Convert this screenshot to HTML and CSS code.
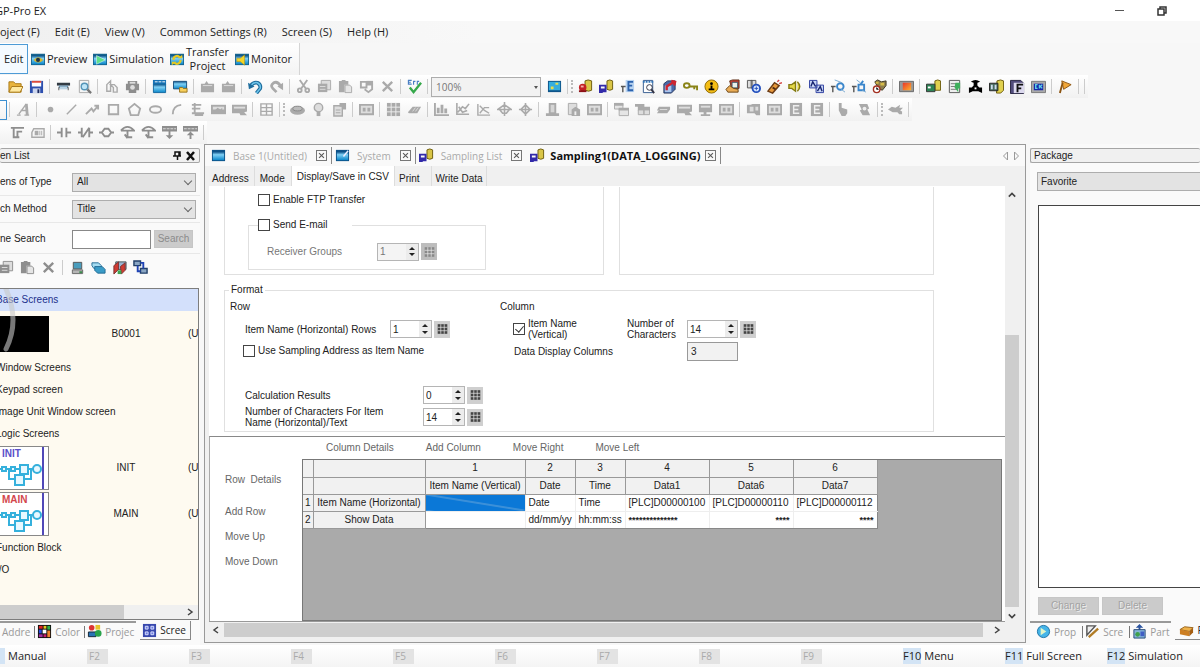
FILE: index.html
```html
<!DOCTYPE html>
<html lang="en">
<head>
  <meta charset="UTF-8">
  <meta name="viewport" content="width=device-width, initial-scale=1.0">
  <title>GP-Pro EX</title>
  <link rel="stylesheet" href="styles.css">
</head>
<body>
  <!-- icon set -->
  <svg class="defs" aria-hidden="true">
    <defs>
      <linearGradient id="blue" x1="0" y1="0" x2="0" y2="1"><stop offset="0" stop-color="#0b4f86"/><stop offset=".35" stop-color="#7fd0f5"/><stop offset="1" stop-color="#0a86c9"/></linearGradient>
      <linearGradient id="sunset" x1="0" y1="0" x2="1" y2="1"><stop offset="0" stop-color="#e8352a"/><stop offset="1" stop-color="#ffb32e"/></linearGradient>
      <symbol id="screen" viewBox="0 0 16 16"><path fill="#0d5288" d="M1 2h14v12H1z"/><path fill="url(#blue)" d="M2 4h12v9H2z"/></symbol>
      <symbol id="system" viewBox="0 0 16 16"><path fill="#0d5288" d="M1 2h14v12H1z"/><path fill="url(#blue)" d="M2 4h12v9H2z"/><path stroke="#eef" stroke-width="1.500" d="M9 9l5-6"/></symbol>
      <symbol id="preview" viewBox="0 0 16 16"><path fill="#17648f" d="M0 2h16v13H0z"/><path fill="url(#blue)" d="M1 4h14v10H1z"/><path fill="#d5b72c" d="M3 9q5-6 11 0-6 6-11 0"/><circle cx="8" cy="9" r="2.300" fill="#234"/></symbol>
      <symbol id="simulate" viewBox="0 0 16 16"><path fill="#17648f" d="M0 2h16v13H0z"/><path fill="url(#blue)" d="M1 4h14v10H1z"/><path fill="#5fe08a" stroke="#fff" stroke-width=".5" d="M4 4l10 5-10 5z"/></symbol>
      <symbol id="transfer" viewBox="0 0 16 16"><path fill="#17648f" d="M0 2h16v13H0z"/><path fill="url(#blue)" d="M1 4h14v10H1z"/><path fill="none" stroke="#e4c822" stroke-width="2.500" d="M4 9a4 4 0 0 1 7-3M12 9a4 4 0 0 1-7 3"/><path fill="#e4c822" d="M9 7h5V3zM7 11H2v4z"/></symbol>
      <symbol id="monitor" viewBox="0 0 16 16"><path fill="#17648f" d="M0 2h16v13H0z"/><path fill="url(#blue)" d="M1 4h14v10H1z"/><path fill="#f4d526" stroke="#977a10" stroke-width=".5" d="M2 7h4l5-4v12l-5-4H2z"/></symbol>
      <symbol id="open" viewBox="0 0 16 16"><path fill="#e9b43c" stroke="#a87818" d="M1 3h5l2 2h6v9H1z"/><path fill="#ffe9a0" stroke="#a87818" d="M4 8h12l-3 6H1z"/></symbol>
      <symbol id="save" viewBox="0 0 16 16"><path fill="#2d4fae" d="M1 2h14v13H1z"/><path fill="#fff" d="M3 2h10v6H3z"/><path fill="#dd4b3c" d="M3 2h10v2H3z"/><path fill="#cdd6ee" d="M4 10h8v5H4z"/><path fill="#1b2a60" d="M9 11h2v4H9z"/></symbol>
      <symbol id="print" viewBox="0 0 16 16"><path fill="#333c44" d="M1 4h14v3H1z"/><path fill="#5c8daf" d="M3 7h10v3H3z"/><path fill="none" stroke="#555" d="M3 12V9h10v3"/><path fill="#b9d3e4" d="M4 8h8v3H4z"/></symbol>
      <symbol id="find" viewBox="0 0 16 16"><path fill="#f5f5f5" stroke="#a7a7a7" d="M2.500 1.500h10v13h-10z"/><circle cx="8" cy="8" r="3.500" fill="#bfe5f7" stroke="#5595b8" stroke-width="1.500"/><path stroke="#777" stroke-width="2.500" d="M11 11l4 4"/></symbol>
      <symbol id="binocs" viewBox="0 0 16 16"><path fill="none" stroke="currentColor" stroke-width="1.500" d="M3 6l4-4v11H3zM7 6h4l3 3v5h-4V9z"/></symbol>
      <symbol id="device" viewBox="0 0 16 16"><path fill="currentColor" d="M3 2h10v3h2v7h-3v3H4v-3H1V5h2z"/><path fill="#ddd" d="M5 3h6v2H5z"/><circle cx="8" cy="9" r="2.500" fill="#ddd"/></symbol>
      <symbol id="newscreen" viewBox="0 0 16 16"><path fill="#1672b5" d="M1 1h14v5H1z"/><path stroke="#fff" stroke-dasharray="3 1" d="M3 3h11"/><path fill="url(#blue)" stroke="#12679f" d="M1.500 5.500h13v9h-13z"/></symbol>
      <symbol id="openscreen" viewBox="0 0 16 16"><path fill="url(#blue)" stroke="#174f7d" d="M.5 2.500h14v8H.5z"/><path fill="#f7d05d" stroke="#98721b" d="M7 9h3l1 1h4v4H7z"/></symbol>
      <symbol id="case" viewBox="0 0 16 16"><path fill="currentColor" d="M1 5h4l2-3 2 3h6v9H1z"/><path stroke="#ddd" d="M3 7h10"/></symbol>
      <symbol id="undo" viewBox="0 0 16 16"><path fill="none" stroke="#1f6e9e" stroke-width="4" d="M3 7q3-4 7-3 4 2 3 6l-4 5"/><path fill="none" stroke="#6ec6ec" stroke-width="1.500" d="M3 7q3-4 7-3 4 2 3 6l-4 5"/><path fill="#1f6e9e" d="M0 4l1 7 6-3z"/></symbol>
      <symbol id="redo" viewBox="0 0 16 16"><path fill="none" stroke="currentColor" stroke-width="3" d="M12 7Q9 2 5 4 1 7 4 10l4 4"/><path fill="currentColor" d="M15 4v8L9 8z"/></symbol>
      <symbol id="cut" viewBox="0 0 16 16"><g fill="none" stroke="currentColor" stroke-width="2"><path d="M4 1l7 10M12 1L5 11"/><circle cx="4" cy="12" r="2"/><circle cx="12" cy="12" r="2"/></g></symbol>
      <symbol id="copy" viewBox="0 0 16 16"><path fill="#ddd" stroke="currentColor" d="M4.500 1.500h10v10h-10z"/><path fill="currentColor" d="M1 5h10v9H1z"/><path stroke="#ddd" d="M3 8h6M3 11h6"/></symbol>
      <symbol id="paste" viewBox="0 0 16 16"><path fill="currentColor" d="M1 2h3V1h4v1h3v4H7v8H1z"/><path fill="#e5e5e5" stroke="currentColor" d="M7.500 6.500h5l2 2v6h-7z"/></symbol>
      <symbol id="multi" viewBox="0 0 16 16"><path fill="none" stroke="currentColor" stroke-width="2" d="M2 3h6v6H2zM7 6h7v5l-4 3-4-3"/><path fill="currentColor" d="M8 2h7v4H8z"/></symbol>
      <symbol id="delete" viewBox="0 0 16 16"><path stroke="currentColor" stroke-width="2.500" d="M3 3l10 10M13 3L3 13"/></symbol>
      <symbol id="check" viewBox="0 0 16 16"><path fill="none" stroke="#4a7fc4" stroke-width="1.200" d="M1.500 1v5M1 1.500h4M1 3.500h3M1 5.500h4M7 6V2.500h2M11 6V2.500h2"/><path fill="none" stroke="#35a84a" stroke-width="2.500" d="M3 9l4 5 8-10"/></symbol>
      <symbol id="fit" viewBox="0 0 16 16"><path fill="#0e5489" d="M1 2h14v12H1z"/><path fill="#35aede" d="M2 3h12v9H2z"/><path fill="#e6dc4d" d="M4 8h3v3H4zM9 4h3v2H9z"/></symbol>
      <symbol id="drum-red" viewBox="0 0 16 16"><path fill="#d9c547" stroke="#6c5b0c" d="M7.500 2q3-2 7 0v10q-3 2-7 0z"/><circle cx="5" cy="9" r="4" fill="#c31f24"/><path fill="#8b1016" d="M1 12h8v2H1z"/><path fill="#f3b0a8" d="M3 7h3v2H3z"/></symbol>
      <symbol id="drum-blue" viewBox="0 0 16 16"><path fill="#d9c547" stroke="#6c5b0c" d="M8.500 2q3-2 6 0v9q-3 2-6 0z"/><path fill="none" stroke="#322aa9" stroke-width="2" d="M1 13V7h6v6H5v-2H3v3H0"/></symbol>
      <symbol id="drum-green" viewBox="0 0 16 16"><path fill="#e0d04e" stroke="#6c5b0c" d="M9.500 2q3-2 6 0v10h-6z"/><path fill="#2d8355" stroke="#333" d="M.5 5.500h9v8h-9z"/><path fill="#fff" d="M2 8h3v2H2z"/></symbol>
      <symbol id="drum-gray" viewBox="0 0 16 16"><path fill="#e0d04e" stroke="#6c5b0c" d="M8.500 2q4-2 7 0v10l-3 3H8z"/><path fill="#47695c" stroke="#222" d="M.5 4.500h9v8h-9z"/><path fill="#cde" d="M2 6h2v5H2zM6 6h2v5H6z"/></symbol>
      <symbol id="te" viewBox="0 0 16 16"><path fill="#b8d3f0" d="M6 1h9v13H6z"/><path fill="none" stroke="#555" stroke-width="1.500" d="M1 8h5M3 8v6"/><path fill="none" stroke="#2b62ad" stroke-width="2" d="M14 3H9v9h5M9 7h4"/></symbol>
      <symbol id="paperlens" viewBox="0 0 16 16"><path fill="#fff" stroke="#31588d" d="M2.500 1.500h10v13h-10z"/><path stroke="#3275b8" stroke-width="2" stroke-dasharray="2 1" d="M2 3h12"/><circle cx="9" cy="9" r="3" fill="none" stroke="#334"/><path stroke="#334" stroke-width="2" d="M11 11l3 4"/></symbol>
      <symbol id="pages" viewBox="0 0 16 16"><path fill="#4a69a9" stroke="#26365c" d="M2 5l4-3h8v9l-4 4H2z"/><path fill="#a9c6ed" d="M3 7h7v7H3z"/><path fill="none" stroke="#cf2530" stroke-width="2.500" d="M5 12V8l8-5M10 2l4 1-1 4"/></symbol>
      <symbol id="key" viewBox="0 0 16 16"><path fill="none" stroke="#8a8418" stroke-width="2" d="M7 8h8v4M12 8v3"/><ellipse cx="4" cy="7" rx="3" ry="2.500" fill="#fff" stroke="#8a8418" stroke-width="2"/></symbol>
      <symbol id="warn" viewBox="0 0 16 16"><circle cx="8" cy="8" r="7" fill="#f4bd16" stroke="#8e6a06"/><circle cx="8" cy="5" r="1.500"/><path d="M7 7h2v3h2v2H5v-2h2z"/></symbol>
      <symbol id="handbox" viewBox="0 0 16 16"><path fill="#c43e31" stroke="#603018" d="M5 2l3-1h7v9H7z"/><path fill="#e8f0ea" stroke="#356" d="M7.500 3.500h6v6h-6z"/><path fill="#e9ac56" stroke="#6b4617" d="M1 11l4-4 4 3 5 1v3H3z"/></symbol>
      <symbol id="docs" viewBox="0 0 16 16"><path fill="#ddd" stroke="#555" d="M1.500 1.500h5v8h-5zM5.500 1.500h5v8h-5z"/><circle cx="11" cy="10" r="4" fill="#dae9ff" stroke="#2450bd" stroke-width="2"/><path stroke="#2450bd" d="M9 10h4M11 8v4"/></symbol>
      <symbol id="remote" viewBox="0 0 16 16"><path fill="#e7983b" stroke="#6c3b14" stroke-width="1.500" d="M1 13L8 4l5 3-7 8z"/><path stroke="#512a11" stroke-width="2" d="M6 9l3 2"/><path stroke="#d54545" stroke-width="1.500" d="M11 3l2-2M13 5l3-1"/></symbol>
      <symbol id="sound" viewBox="0 0 16 16"><path fill="#e5d947" stroke="#847b12" stroke-width="1.500" d="M1 6h3l4-3v10l-4-3H1zM10 3q5 5 0 10"/></symbol>
      <symbol id="aa" viewBox="0 0 16 16"><path fill="#c8d5f5" stroke="#2c3d9f" d="M.5 1.500h8v8h-8zM7.500 6.500h8v8h-8z"/><path fill="none" stroke="#17236f" stroke-width="1.500" d="M2 8l2-5 3 5M9 13l3-5 2 5"/></symbol>
      <symbol id="tq" viewBox="0 0 16 16"><path fill="none" stroke="#555" stroke-width="1.500" d="M1 8h5M3 8v6"/><circle cx="11" cy="8" r="3.500" fill="none" stroke="#3a86cc" stroke-width="2"/><path stroke="#77a7cf" d="M5 1l8 3M12 11l4 3"/></symbol>
      <symbol id="tb" viewBox="0 0 16 16"><path fill="none" stroke="#555" stroke-width="1.500" d="M1 8h5M3 8v6"/><path fill="none" stroke="#3a86cc" stroke-width="2" d="M8 6h6v6H8zM10 6L13 2"/><path stroke="#77a7cf" d="M6 1l4 3M12 12l4 2"/></symbol>
      <symbol id="clockgear" viewBox="0 0 16 16"><path fill="#8d7e4c" stroke="#3b3420" d="M3 3l3-2 4 2 5-1v5l-4 5-4-2z"/><path fill="#d6bb48" d="M4 3h3v2H4zM9 4h4v3H9z"/><circle cx="5" cy="11" r="3.500" fill="#fff" stroke="#a33021" stroke-width="1.500"/><path stroke="#222" d="M5 9v2h2"/></symbol>
      <symbol id="pic" viewBox="0 0 16 16"><path fill="#999" stroke="#666" d="M.5 2.500h15v11H.5z"/><path fill="url(#sunset)" d="M4 4h9v8H4z"/></symbol>
      <symbol id="note" viewBox="0 0 16 16"><path fill="#eee" stroke="#555" d="M2.500 1.500h11v13h-11z"/><path stroke="#777" d="M4 5h7M4 8h7M4 11h7"/><path fill="#3faf5c" d="M9 4h5v6h-2v4L8 9z"/></symbol>
      <symbol id="valve" viewBox="0 0 16 16"><path d="M3 3q5-4 10 0l-3 1v3l2 2h3v6l-4-2H5l-4 2V9h3l2-2V4z"/><path fill="#fff" d="M7 9h2v2H7z"/></symbol>
      <symbol id="fbox" viewBox="0 0 16 16"><path fill="#514c7c" stroke="#25223f" d="M.5 1.500h11l3 3v11h-14z"/><path fill="#dcd9ee" d="M4 4h11v11H4z"/><path fill="none" stroke="#111" stroke-width="2" d="M8 14V6h6M8 10h4"/></symbol>
      <symbol id="ck" viewBox="0 0 16 16"><path fill="#aaa" stroke="#777" d="M.5 2.500h15v12H.5z"/><path fill="#1726a8" d="M3 5h10v7H3z"/><path fill="none" stroke="#5bd0e8" stroke-width="1.500" d="M7 6H5v4h2M9 6v4M12 6l-2 2 2 2"/></symbol>
      <symbol id="flag" viewBox="0 0 16 16"><path fill="#f0a638" stroke="#8c5410" d="M4 2l10 4-8 5z"/><path stroke="#8c5410" stroke-width="2" d="M5 4L2 15"/></symbol>
      <symbol id="letter" viewBox="0 0 16 16"><path fill="none" stroke="currentColor" stroke-width="1.500" d="M1 14h4M9 14h5M3 13L11 2M5 9h6"/><path stroke="currentColor" stroke-width="3" d="M11 2l1 12"/></symbol>
      <symbol id="dot" viewBox="0 0 16 16"><circle cx="8" cy="8" r="3" fill="currentColor"/></symbol>
      <symbol id="line" viewBox="0 0 16 16"><path stroke="currentColor" stroke-width="1.500" d="M3 13L13 3"/></symbol>
      <symbol id="poly" viewBox="0 0 16 16"><path fill="none" stroke="currentColor" stroke-width="2" d="M1 13l6-6 2 3 5-6M10 4h4v4"/></symbol>
      <symbol id="rect" viewBox="0 0 16 16"><path fill="none" stroke="currentColor" stroke-width="2" d="M3 3h10v10H3z"/></symbol>
      <symbol id="penta" viewBox="0 0 16 16"><path fill="none" stroke="currentColor" stroke-width="2" d="M8 2l6 5-2 7H4L2 7z"/></symbol>
      <symbol id="ellipse" viewBox="0 0 16 16"><ellipse cx="8" cy="8" rx="6" ry="3.500" fill="none" stroke="currentColor" stroke-width="2"/></symbol>
      <symbol id="arc" viewBox="0 0 16 16"><path fill="none" stroke="currentColor" stroke-width="2" d="M4 13Q4 4 13 3"/></symbol>
      <symbol id="scale" viewBox="0 0 16 16"><path fill="none" stroke="currentColor" stroke-width="2" d="M5 1v11h10M2 3h10M2 7h9M5 14h9M2 12h3"/></symbol>
      <symbol id="img" viewBox="0 0 16 16"><path fill="currentColor" d="M0 3h16v10H0z"/><path fill="#ddd" d="M2 5h12v3H2z"/><path fill="currentColor" d="M4 9l3-3 3 2 2-2v3z"/></symbol>
      <symbol id="imgcut" viewBox="0 0 16 16"><path fill="currentColor" d="M0 3h16v7l-3 1 3 3H9l-1-2H0z"/><path fill="#ddd" d="M2 5h12v2H2z"/></symbol>
      <symbol id="table" viewBox="0 0 16 16"><path fill="none" stroke="currentColor" stroke-width="1.500" d="M2 2h12v12H2zM8 2v12M2 6h12M2 10h12"/></symbol>
      <symbol id="switch" viewBox="0 0 16 16"><ellipse cx="8" cy="9" rx="8" ry="4.500" fill="currentColor"/><ellipse cx="8" cy="7" rx="5" ry="2.500" fill="#bbb" stroke="#888"/></symbol>
      <symbol id="lamp" viewBox="0 0 16 16"><circle cx="8" cy="6" r="4.500" fill="#ddd" stroke="currentColor" stroke-width="1.500"/><path fill="currentColor" d="M6 10h4v5H6z"/></symbol>
      <symbol id="part" viewBox="0 0 16 16"><path fill="#ddd" stroke="currentColor" stroke-width="1.500" d="M2 4h9v11H2z"/><path fill="currentColor" d="M8 1h7v7h-4V5H8zM4 8h5v1H4zM4 11h5v1H4z"/></symbol>
      <symbol id="panel" viewBox="0 0 16 16"><path fill="#ddd" stroke="currentColor" stroke-width="2" d="M1 3h14v10H1z"/><path fill="currentColor" d="M4 6h3v4H4zM9 6h3v4H9z"/></symbol>
      <symbol id="keypad" viewBox="0 0 16 16"><path fill="currentColor" d="M1 1h14v14H1z"/><path stroke="#eee" d="M1 5.500h14M1 10.500h14M5.500 1v14M10.500 1v14"/></symbol>
      <symbol id="eraser" viewBox="0 0 16 16"><path fill="currentColor" d="M1 11l5-6h9l-4 7H2z"/><path stroke="#ddd" d="M6 10l3-4M9 10l3-4"/></symbol>
      <symbol id="bars" viewBox="0 0 16 16"><path fill="currentColor" d="M0 1h2v12h14v2H0zM3 6h3v6H3zM7 3h3v9H7zM11 7h3v5h-3z"/></symbol>
      <symbol id="trend" viewBox="0 0 16 16"><path fill="none" stroke="currentColor" stroke-width="1.700" d="M2 1v12h13M3 11l5-6 3 2 4-5M4 5l4 6 5-2"/></symbol>
      <symbol id="xy" viewBox="0 0 16 16"><path fill="none" stroke="currentColor" stroke-width="1.500" d="M2 2v12h13M4 4l5 5 5 3M4 12l5-6 5 0"/></symbol>
      <symbol id="radar" viewBox="0 0 16 16"><path fill="none" stroke="currentColor" stroke-width="1.700" d="M8 3l6 4-4 5H6L2 7zM8 0v15M0 8h16"/></symbol>
      <symbol id="diamond" viewBox="0 0 16 16"><path fill="none" stroke="currentColor" stroke-width="1.700" d="M8 3l5 5-5 5-5-5zM8 1v14M1 8h14"/></symbol>
      <symbol id="bell" viewBox="0 0 16 16"><path fill="currentColor" d="M4 1h8v11h3v3H1v-3h3z"/><path fill="#d5d5d5" d="M6 3h4v8H6z"/></symbol>
      <symbol id="sheet" viewBox="0 0 16 16"><path fill="#ddd" stroke="currentColor" d="M2.500 1.500h9v12h-9z"/><path fill="currentColor" d="M6 8l4-3 5 3v7H6z"/><path fill="#eee" d="M9 10h2v4H9z"/></symbol>
      <symbol id="windows" viewBox="0 0 16 16"><path fill="#e5e5e5" stroke="currentColor" d="M.5 1.500h9v6h-9zM5.500 7.500h10v7h-10z"/><path fill="currentColor" d="M0 1h10v3H0zM5 6h11v3H5z"/></symbol>
      <symbol id="windows2" viewBox="0 0 16 16"><path fill="currentColor" d="M0 2h10v3H0zM3 5h13v4H3z"/><path fill="#ddd" stroke="currentColor" d="M3.500 8.500h6v5h-6zM9.500 8.500h6v5h-6z"/></symbol>
      <symbol id="slab" viewBox="0 0 16 16"><path fill="currentColor" d="M3 5h12v3l-3 4H1l2-3H1z"/><path stroke="#ddd" d="M4 8h8"/></symbol>
      <symbol id="pc" viewBox="0 0 16 16"><path fill="currentColor" d="M1 2h14v9H9v2h4v2H3v-2h3v-2H1z"/><path fill="#ddd" d="M3 4h10v2H3z"/></symbol>
      <symbol id="movie" viewBox="0 0 16 16"><path fill="currentColor" d="M1 3h4l2-1h8v12h-4l-2-2H1z"/><path fill="#ddd" d="M4 5h4v5H4zM10 5h3v4h-3z"/></symbol>
      <symbol id="ebox" viewBox="0 0 16 16"><path fill="currentColor" d="M2 1h13v14H2z"/><path fill="none" stroke="#eee" stroke-width="1.500" d="M12 4H6v8h6M6 8h5"/></symbol>
      <symbol id="finger" viewBox="0 0 16 16"><path fill="currentColor" d="M3 1h3v5l6 2v4l-2 3H6L3 9z"/></symbol>
      <symbol id="scroll" viewBox="0 0 16 16"><path fill="currentColor" d="M2 2h9l2 5-2 1 3 6H6l-3-5 2-1z"/><circle cx="8" cy="7" r="2" fill="#eee"/></symbol>
      <symbol id="cloud" viewBox="0 0 16 16"><path fill="currentColor" d="M0 8l4-3 4 1 5-3-1 3h4l-3 3 2 1v3h-3l-2-2H5z"/></symbol>
      <symbol id="tf" viewBox="0 0 16 16"><path fill="none" stroke="currentColor" stroke-width="2" d="M2 3h14M5 3v10h4V7h5M4 13h7"/></symbol>
      <symbol id="tag" viewBox="0 0 16 16"><path fill="none" stroke="currentColor" stroke-width="1.500" d="M4 4h11v9H2V8z"/><path fill="currentColor" d="M5 6h4v5H5zM10 6h1v5h-1zM12 6h1v5h-1z"/></symbol>
      <symbol id="contact" viewBox="0 0 16 16"><path fill="none" stroke="currentColor" stroke-width="2" d="M0 8h5M5 3v10M10 3v10M10 8h5"/></symbol>
      <symbol id="nc" viewBox="0 0 16 16"><path fill="none" stroke="currentColor" stroke-width="2" d="M0 8h4M4 3v10M12 3v10M12 8h4M5 13l7-10"/></symbol>
      <symbol id="coil" viewBox="0 0 16 16"><path fill="none" stroke="currentColor" stroke-width="2" d="M0 8h3l3-4h4l3 4h3M3 8l3 4h4l3-4"/></symbol>
      <symbol id="branch" viewBox="0 0 16 16"><path fill="none" stroke="currentColor" stroke-width="2" d="M1 6q7-8 14 0H1M8 6v7h5M5 10l3 4"/></symbol>
      <symbol id="insert" viewBox="0 0 16 16"><path fill="currentColor" d="M0 1h16v6H0zM7 7h2v4h3l-4 4-4-4h3z"/><path stroke="#ddd" stroke-dasharray="3 1" d="M1 4h14"/></symbol>
      <symbol id="append" viewBox="0 0 16 16"><path fill="currentColor" d="M0 1h16v6H0zM7 15h2v-4h3L8 7l-4 4h3z"/><path stroke="#ddd" stroke-dasharray="3 1" d="M1 4h14"/></symbol>
      <symbol id="laptop" viewBox="0 0 16 16"><path fill="#4a9dbd" stroke="#555" d="M3.500 2.500h9v7h-9z"/><path fill="#b5b5b5" stroke="#666" d="M2.500 10.500h11v4h-11z"/><path stroke="#3c8e4e" stroke-width="2" d="M10 13h3"/></symbol>
      <symbol id="sheets" viewBox="0 0 16 16"><path fill="#a6dcf1" stroke="#246c94" d="M1 3h7l3 3-1 3H3L1 6z"/><path fill="#3a9cc7" stroke="#246c94" d="M4 7h8l3 3v4H7L4 11z"/></symbol>
      <symbol id="redbook" viewBox="0 0 16 16"><path fill="#9bb6d3" stroke="#455" d="M4 2h11v8H4z"/><path fill="#cf3b32" stroke="#733" d="M2 6l5-4v8l-5 5zM9 7l5-4v8l-4 4z"/><path fill="#3fa351" d="M6 11h4v4H6z"/></symbol>
      <symbol id="nodes" viewBox="0 0 16 16"><path fill="#8aa6c4" stroke="#234069" stroke-width="1.500" d="M1 1h7v5H1zM8 9h7v5H8z"/><path fill="none" stroke="#1f43b4" stroke-width="2" d="M5 6v6h3M11 9V3H8"/></symbol>
      <symbol id="palette" viewBox="0 0 16 16"><path fill="#111" d="M1 1h14v14H1z"/><path fill="#d22" d="M2 2h4v3H2z"/><path fill="#e5c91f" d="M7 2h3v3H7z"/><path fill="#2ab04b" d="M11 2h3v4h-3z"/><path fill="#2a4be0" d="M2 6h3v4H2z"/><path fill="#fff" d="M6 6h4v4H6z"/><path fill="#a3309f" d="M2 11h4v3H2z"/><path fill="#f0832a" d="M11 7h3v7h-3z"/><path fill="#c31d6c" d="M7 11h3v3H7z"/></symbol>
      <symbol id="project" viewBox="0 0 16 16"><circle cx="5" cy="4" r="3" fill="#d33"/><path fill="#e7c42b" d="M9 1h5v5H9z"/><path fill="#2873b4" stroke="#123" d="M1.500 8.500h8v5h-8z"/><circle cx="12" cy="10" r="3.500" fill="#28a34a"/></symbol>
      <symbol id="tiles" viewBox="0 0 16 16"><path fill="#3848ad" d="M1 1h14v14H1z"/><path fill="#6d7ce0" stroke="#dce2ff" d="M3.500 3.500h3v3h-3zM9.500 3.500h3v3h-3zM3.500 9.500h3v3h-3zM9.500 9.500h3v3h-3z"/></symbol>
      <symbol id="globe" viewBox="0 0 16 16"><circle cx="8" cy="8" r="6.500" fill="#46b5e8" stroke="#1a71a5"/><path fill="#e2f5c8" d="M5 4l6 4-6 4z"/></symbol>
      <symbol id="ruler" viewBox="0 0 16 16"><path fill="#eee" stroke="#555" stroke-width="1.500" d="M2 2h9L2 12z"/><path stroke="#b17c25" stroke-width="2.500" d="M4 14l10-9"/></symbol>
      <symbol id="parts" viewBox="0 0 16 16"><path fill="#2a53a0" d="M8 0l4 4H9v3H7V4H4z"/><path fill="#85b5d9" stroke="#274a78" d="M2 6h12v9H2z"/><circle cx="6" cy="11" r="2.500" fill="#3fa04d"/><path fill="#405ec4" d="M9 8h4v5H9z"/></symbol>
      <symbol id="box" viewBox="0 0 16 16"><path fill="#efb24a" stroke="#96621a" d="M1 7l5-3 9 1-4 4z"/><path fill="#cd7f22" d="M1 7l10 2v5L1 12z"/><path fill="#a55e12" d="M11 9l4-4v5l-4 4z"/></symbol>
      <symbol id="logic" viewBox="0 0 48 28"><path fill="none" stroke="#35b0dc" stroke-width="2" d="M0 8h20M28 8h6M9 8v10h6M31 8v10h-6"/><g fill="#e8f8ff" stroke="#35b0dc" stroke-width="2"><path d="M2 6h4v4H2zM11 6h4v4h-4zM20 4h8v9h-8zM15 14h9v10h-9z"/><circle cx="37" cy="8" r="4"/></g></symbol>
    </defs>
  </svg>

  <div class="window">
    <header class="titlebar">
      <h1>GP-Pro EX</h1>
      <div class="wincontrols">
        <button aria-label="Minimize"><svg viewBox="0 0 12 12"><path stroke="#555" d="M1 5.500h9"/></svg></button>
        <button aria-label="Restore"><svg viewBox="0 0 12 12"><path fill="none" stroke="#333" stroke-width="1.500" d="M2 4h6v6H2zM4 4V2h6v6H8"/></svg></button>
      </div>
    </header>

    <nav class="menubar">
      <button>oject (F)</button>
      <button>Edit (E)</button>
      <button>View (V)</button>
      <button>Common Settings (R)</button>
      <button>Screen (S)</button>
      <button>Help (H)</button>
    </nav>

    <div class="modebar">
      <button class="mode active">Edit</button>
      <button class="mode"><svg><use href="#preview"/></svg>Preview</button>
      <button class="mode"><svg><use href="#simulate"/></svg>Simulation</button>
      <button class="mode"><svg><use href="#transfer"/></svg><span>Transfer<br>Project</span></button>
      <button class="mode"><svg><use href="#monitor"/></svg>Monitor</button>
    </div>

    <div class="toolbar first">
      <svg class="tool"><use href="#open"/></svg>
      <svg class="tool"><use href="#save"/></svg>
      <i class="sep"></i>
      <svg class="tool"><use href="#print"/></svg>
      <svg class="tool"><use href="#find"/></svg>
      <i class="sep"></i>
      <svg class="tool"><use href="#binocs"/></svg>
      <svg class="tool dark"><use href="#device"/></svg>
      <i class="sep"></i>
      <svg class="tool"><use href="#newscreen"/></svg>
      <svg class="tool"><use href="#openscreen"/></svg>
      <i class="sep"></i>
      <svg class="tool"><use href="#case"/></svg>
      <svg class="tool"><use href="#case"/></svg>
      <i class="sep"></i>
      <svg class="tool"><use href="#undo"/></svg>
      <svg class="tool"><use href="#redo"/></svg>
      <i class="sep"></i>
      <svg class="tool"><use href="#cut"/></svg>
      <svg class="tool"><use href="#copy"/></svg>
      <svg class="tool"><use href="#paste"/></svg>
      <svg class="tool"><use href="#multi"/></svg>
      <svg class="tool"><use href="#delete"/></svg>
      <i class="sep"></i>
      <svg class="tool"><use href="#check"/></svg>
      <i class="sep"></i>
      <span class="dropdown zoom"><select aria-label="Zoom"><option>100%</option></select></span>
      <svg class="tool"><use href="#fit"/></svg>
      <i class="sep"></i><i class="grip"></i>
      <svg class="tool"><use href="#drum-red"/></svg>
      <svg class="tool"><use href="#drum-blue"/></svg>
      <svg class="tool"><use href="#te"/></svg>
      <svg class="tool"><use href="#paperlens"/></svg>
      <svg class="tool"><use href="#pages"/></svg>
      <svg class="tool"><use href="#key"/></svg>
      <svg class="tool"><use href="#warn"/></svg>
      <svg class="tool"><use href="#handbox"/></svg>
      <svg class="tool"><use href="#docs"/></svg>
      <svg class="tool"><use href="#remote"/></svg>
      <svg class="tool"><use href="#sound"/></svg>
      <svg class="tool"><use href="#aa"/></svg>
      <svg class="tool"><use href="#tq"/></svg>
      <svg class="tool"><use href="#tb"/></svg>
      <svg class="tool"><use href="#clockgear"/></svg>
      <i class="sep"></i>
      <svg class="tool"><use href="#pic"/></svg>
      <i class="sep"></i>
      <svg class="tool"><use href="#drum-green"/></svg>
      <svg class="tool"><use href="#note"/></svg>
      <svg class="tool"><use href="#valve"/></svg>
      <svg class="tool"><use href="#drum-gray"/></svg>
      <svg class="tool"><use href="#fbox"/></svg>
      <svg class="tool"><use href="#ck"/></svg>
      <i class="sep"></i>
      <svg class="tool"><use href="#flag"/></svg>
      <i class="sep"></i><i class="sep"></i>
    </div>

    <div class="toolbar second">
      <i class="selected"></i>
      <i class="sep"></i>
      <svg class="tool"><use href="#letter"/></svg>
      <i class="sep"></i>
      <svg class="tool"><use href="#dot"/></svg>
      <svg class="tool"><use href="#line"/></svg>
      <svg class="tool"><use href="#poly"/></svg>
      <svg class="tool"><use href="#rect"/></svg>
      <svg class="tool"><use href="#penta"/></svg>
      <svg class="tool"><use href="#ellipse"/></svg>
      <svg class="tool"><use href="#arc"/></svg>
      <svg class="tool"><use href="#scale"/></svg>
      <svg class="tool"><use href="#img"/></svg>
      <svg class="tool"><use href="#imgcut"/></svg>
      <i class="sep"></i>
      <svg class="tool"><use href="#table"/></svg>
      <i class="sep"></i><i class="grip"></i>
      <svg class="tool"><use href="#switch"/></svg>
      <svg class="tool"><use href="#lamp"/></svg>
      <svg class="tool"><use href="#part"/></svg>
      <i class="sep"></i>
      <svg class="tool"><use href="#panel"/></svg>
      <i class="sep"></i>
      <svg class="tool"><use href="#keypad"/></svg>
      <svg class="tool"><use href="#eraser"/></svg>
      <i class="sep"></i>
      <svg class="tool"><use href="#bars"/></svg>
      <svg class="tool"><use href="#trend"/></svg>
      <svg class="tool"><use href="#xy"/></svg>
      <svg class="tool"><use href="#radar"/></svg>
      <svg class="tool"><use href="#diamond"/></svg>
      <i class="sep"></i>
      <svg class="tool"><use href="#bell"/></svg>
      <svg class="tool"><use href="#sheet"/></svg>
      <svg class="tool"><use href="#panel"/></svg>
      <i class="sep"></i>
      <svg class="tool"><use href="#windows"/></svg>
      <svg class="tool"><use href="#windows2"/></svg>
      <svg class="tool"><use href="#slab"/></svg>
      <svg class="tool"><use href="#imgcut"/></svg>
      <svg class="tool"><use href="#pc"/></svg>
      <svg class="tool"><use href="#panel"/></svg>
      <i class="sep"></i>
      <svg class="tool"><use href="#movie"/></svg>
      <svg class="tool"><use href="#panel"/></svg>
      <svg class="tool"><use href="#ebox"/></svg>
      <svg class="tool"><use href="#ebox"/></svg>
      <i class="sep"></i>
      <svg class="tool"><use href="#finger"/></svg>
      <svg class="tool"><use href="#scroll"/></svg>
      <i class="sep"></i><i class="grip"></i>
      <svg class="tool"><use href="#cloud"/></svg>
      <i class="sep"></i>
    </div>

    <div class="toolbar third">
      <svg class="tool dark"><use href="#tf"/></svg>
      <svg class="tool"><use href="#tag"/></svg>
      <i class="sep"></i>
      <svg class="tool dark"><use href="#contact"/></svg>
      <svg class="tool dark"><use href="#nc"/></svg>
      <svg class="tool dark"><use href="#coil"/></svg>
      <svg class="tool dark"><use href="#branch"/></svg>
      <svg class="tool dark"><use href="#branch"/></svg>
      <svg class="tool dark"><use href="#insert"/></svg>
      <svg class="tool dark"><use href="#append"/></svg>
      <i class="sep"></i>
    </div>

    <main class="workspace">
      <!-- screen list -->
      <aside class="screenlist">
        <div class="panelhead">
          <span>en List</span>
          <svg viewBox="0 0 24 10"><path fill="none" stroke="#111" stroke-width="1.500" d="M3 1h5v4H3zM1 5h8M5.500 5v4M7 1v4"/><path stroke="#111" stroke-width="2.500" d="M15 1l7 8M22 1l-7 8"/></svg>
        </div>
        <div class="searchrow">
          <label for="type">ens of Type</label>
          <span class="dropdown"><select id="type"><option>All</option></select></span>
        </div>
        <div class="searchrow">
          <label for="method">ch Method</label>
          <span class="dropdown"><select id="method"><option>Title</option></select></span>
        </div>
        <div class="searchrow last">
          <label for="search">ne Search</label>
          <input id="search" type="text">
          <button class="graybtn">Search</button>
        </div>
        <div class="listtools">
          <svg class="tool dark"><use href="#copy"/></svg>
          <svg class="tool dark"><use href="#paste"/></svg>
          <svg class="tool dark"><use href="#delete"/></svg>
          <i class="sep"></i>
          <svg class="tool"><use href="#laptop"/></svg>
          <svg class="tool"><use href="#sheets"/></svg>
          <svg class="tool"><use href="#redbook"/></svg>
          <svg class="tool"><use href="#nodes"/></svg>
        </div>
        <div class="tree">
          <ul>
            <li class="current">Base Screens</li>
            <li class="item">
              <div class="thumb black"></div>
              <span class="name">B0001</span><span class="title">(U</span>
            </li>
            <li>Window Screens</li>
            <li>Keypad screen</li>
            <li>Image Unit Window screen</li>
            <li>Logic Screens</li>
            <li class="item">
              <div class="thumb logic init"><b>INIT</b><svg><use href="#logic"/></svg></div>
              <span class="name">INIT</span><span class="title">(U</span>
            </li>
            <li class="item">
              <div class="thumb logic"><b>MAIN</b><svg><use href="#logic"/></svg></div>
              <span class="name">MAIN</span><span class="title">(U</span>
            </li>
            <li>Function Block</li>
            <li>I/O</li>
          </ul>
          <svg class="swirl" viewBox="0 0 16 64"><path fill="none" stroke="#c8c8c8" stroke-opacity=".6" stroke-width="5" d="M6 0Q20 32 6 60" stroke-linecap="round"/></svg>
          <div class="hscroll"><i class="bar"></i><svg viewBox="0 0 8 8"><path fill="none" stroke="#444" stroke-width="1.500" d="M2 1l4 3-4 3"/></svg></div>
        </div>
        <div class="docktabs">
          <button>Addre</button>
          <button><svg><use href="#palette"/></svg>Color</button>
          <button><svg><use href="#project"/></svg>Projec</button>
          <button class="active"><svg><use href="#tiles"/></svg>Scree</button>
        </div>
      </aside>

      <!-- document -->
      <section class="document">
        <div class="doctabs">
          <button><svg><use href="#screen"/></svg>Base 1(Untitled)<i class="close"></i></button>
          <button><svg><use href="#system"/></svg>System<i class="close"></i></button>
          <button><svg><use href="#drum-blue"/></svg>Sampling List<i class="close"></i></button>
          <button class="active"><svg><use href="#drum-blue"/></svg>Sampling1(DATA_LOGGING)<i class="close"></i></button>
          <svg class="arrows" viewBox="0 0 18 10"><path fill="none" stroke="#999" d="M5.500 1v8l-4-4zM12.500 1v8l4-4z"/></svg>
        </div>
        <div class="pagetabs">
          <button>Address</button>
          <button>Mode</button>
          <button class="active">Display/Save in CSV</button>
          <button>Print</button>
          <button class="wide">Write Data</button>
        </div>

        <div class="scrollarea">
          <div class="page">
            <div class="settings">
              <div class="upper">
                <div class="cutbox">
                  <label class="tick"><input type="checkbox">Enable FTP Transfer</label>
                  <fieldset class="mail">
                    <legend><label class="tick"><input type="checkbox">Send E-mail</label></legend>
                    <div class="field disabled">
                      <label for="groups">Receiver Groups</label>
                      <span class="spin"><input id="groups" type="text" value="1" disabled><i class="updown"></i></span>
                      <button class="pad" aria-label="Keypad" disabled><svg><use href="#keypad"/></svg></button>
                    </div>
                  </fieldset>
                </div>
                <div class="cutbox"></div>
              </div>

              <fieldset class="format">
                <legend>Format</legend>
                <div class="rowside">
                  <h2>Row</h2>
                  <div class="field">
                    <label for="rows">Item Name (Horizontal) Rows</label>
                    <span class="spin"><input id="rows" type="text" value="1"><i class="updown"></i></span>
                    <button class="pad" aria-label="Keypad"><svg><use href="#keypad"/></svg></button>
                  </div>
                  <div class="field check">
                    <label class="tick"><input type="checkbox">Use Sampling Address as Item Name</label>
                  </div>
                  <div class="field long results">
                    <label for="calc">Calculation Results</label>
                    <span class="spin"><input id="calc" type="text" value="0"><i class="updown"></i></span>
                    <button class="pad" aria-label="Keypad"><svg><use href="#keypad"/></svg></button>
                  </div>
                  <div class="field long">
                    <label for="chars">Number of Characters For Item<br>Name (Horizontal)/Text</label>
                    <span class="spin"><input id="chars" type="text" value="14"><i class="updown"></i></span>
                    <button class="pad" aria-label="Keypad"><svg><use href="#keypad"/></svg></button>
                  </div>
                </div>
                <div class="colside">
                  <h2>Column</h2>
                  <div class="field">
                    <label class="tick"><input type="checkbox" checked><span>Item Name<br>(Vertical)</span></label>
                    <label for="vchars">Number of<br>Characters</label>
                    <span class="spin wide"><input id="vchars" type="text" value="14"><i class="updown"></i></span>
                    <button class="pad" aria-label="Keypad"><svg><use href="#keypad"/></svg></button>
                  </div>
                  <div class="field">
                    <label class="span" for="cols">Data Display Columns</label>
                    <input id="cols" class="readonly" type="text" value="3" readonly>
                  </div>
                </div>
              </fieldset>
            </div>

            <div class="layout">
              <div class="coltools">
                <button>Column Details</button>
                <button>Add Column</button>
                <button>Move Right</button>
                <button>Move Left</button>
              </div>
              <div class="rowtools">
                <button class="details">Row&nbsp; Details</button>
                <button>Add Row</button>
                <button>Move Up</button>
                <button>Move Down</button>
              </div>
              <div class="gridarea">
                <table>
                  <colgroup><col class="c-no"><col class="c-head"><col class="c-item"><col class="c-time"><col class="c-time"><col class="c-data"><col class="c-data"><col class="c-data"></colgroup>
                  <tr><th></th><th></th><th>1</th><th>2</th><th>3</th><th>4</th><th>5</th><th>6</th></tr>
                  <tr><th></th><th></th><th>Item Name (Vertical)</th><th>Date</th><th>Time</th><th>Data1</th><th>Data6</th><th>Data7</th></tr>
                  <tr><th>1</th><th>Item Name (Horizontal)</th><td class="picked"></td><td>Date</td><td>Time</td><td>[PLC]D00000100</td><td>[PLC]D00000110</td><td>[PLC]D00000112</td></tr>
                  <tr><th>2</th><th>Show Data</th><td></td><td>dd/mm/yy</td><td>hh:mm:ss</td><td class="stars">**************</td><td class="stars right">****</td><td class="stars right">****</td></tr>
                </table>
              </div>
            </div>
          </div>
          <div class="vscroll">
            <svg viewBox="0 0 10 10"><path fill="none" stroke="#444" stroke-width="2" d="M1 7l4-4 4 4"/></svg>
            <i class="bar"></i>
            <svg viewBox="0 0 10 10"><path fill="none" stroke="#444" stroke-width="2" d="M1 3l4 4 4-4"/></svg>
          </div>
          <div class="hscroll">
            <svg viewBox="0 0 8 8"><path fill="none" stroke="#444" stroke-width="1.500" d="M6 1L2 4l4 3"/></svg>
            <i class="bar"></i>
            <svg viewBox="0 0 8 8"><path fill="none" stroke="#444" stroke-width="1.500" d="M2 1l4 3-4 3"/></svg>
          </div>
        </div>
      </section>

      <!-- package -->
      <aside class="package">
        <div class="panelhead"><span>Package</span></div>
        <button class="favorite">Favorite</button>
        <div class="packlist"></div>
        <div class="packbtns">
          <button class="graybtn" disabled>Change</button>
          <button class="graybtn" disabled>Delete</button>
        </div>
        <div class="docktabs">
          <button><svg><use href="#globe"/></svg>Prop</button>
          <button><svg><use href="#ruler"/></svg>Scre</button>
          <button><svg><use href="#parts"/></svg>Part</button>
          <button class="active"><svg><use href="#box"/></svg>P</button>
        </div>
      </aside>
    </main>

    <footer class="keys">
      <span class="on"><kbd></kbd>Manual</span>
      <span><kbd>F2</kbd></span>
      <span><kbd>F3</kbd></span>
      <span><kbd>F4</kbd></span>
      <span><kbd>F5</kbd></span>
      <span><kbd>F6</kbd></span>
      <span><kbd>F7</kbd></span>
      <span><kbd>F8</kbd></span>
      <span><kbd>F9</kbd></span>
      <span class="on"><kbd>F10</kbd>Menu</span>
      <span class="on"><kbd>F11</kbd>Full Screen</span>
      <span class="on"><kbd>F12</kbd>Simulation</span>
    </footer>
  </div>
</body>
</html>
```
FILE: styles.css
```css
*{
  box-sizing:border-box;
  margin:0;
  padding:0;
}
body{
  font-family:"Liberation Sans", Arial, sans-serif;
  font-size:10px;
  line-height:12px;
  color:#222;
  background-color:#f7f7f7;
  overflow:hidden;
}
button, input, select{
  font:inherit;
  color:inherit;
  border:0;
  background:none;
  border-radius:0;
}
button{
  white-space:nowrap;
}
svg{
  display:block;
  flex:none;
}
.defs{
  position:absolute;
  width:0;
  height:0;
}
.window{
  height:100vh;
  display:flex;
  flex-direction:column;
}

/* title, menu and mode bars */
.titlebar{
  flex:none;
  height:21px;
  display:flex;
  justify-content:space-between;
  align-items:center;
  background-color:#fff;
}
.titlebar h1{
  margin-left:-5px;
  font:11px/20px "Open Sans", sans-serif;
}
.wincontrols{
  display:flex;
  gap:30px;
  padding-right:32px;
}
.wincontrols svg{
  width:12px;
  height:12px;
}
.menubar{
  flex:none;
  height:22px;
  display:flex;
  align-items:center;
  gap:15px;
  background:linear-gradient(90deg, #f0f0f0, #f8f8f8 40%);
  font:11px/20px "Open Sans", sans-serif;
}
.modebar{
  flex:none;
  align-self:flex-start;
  width:300px;
  height:32px;
  display:flex;
  align-items:center;
  gap:6px;
  background:linear-gradient(#fff, #f3f3f3);
  border-right:1px solid #d5d5d5;
  font:11px/14px "Open Sans", sans-serif;
}
.mode{
  display:flex;
  align-items:center;
  gap:2px;
}
.mode svg{
  width:14px;
  height:14px;
}
.mode.active{
  width:28px;
  height:30px;
  padding-left:4px;
  margin-right:-3px;
  border:1px solid #4d9bd6;
  border-left:0;
  background-color:#f4faff;
}

/* toolbars */
.toolbar{
  flex:none;
  align-self:flex-start;
  height:23px;
  display:flex;
  align-items:center;
  background:linear-gradient(#fff, #f1f1f1);
  color:#aaa;
}
.toolbar.first{
  padding-left:5px;
}
.toolbar.third{
  padding-left:6px;
}
.tool{
  width:15px;
  height:15px;
  margin:0 3px;
}
.dark{
  color:#8e8e8e;
}
.sep{
  flex:none;
  width:1px;
  height:15px;
  margin:0 3px 0 2px;
  background-color:#ccc;
}
.grip{
  flex:none;
  height:13px;
  margin-right:2px;
  border-left:2px dotted #bbb;
}
.selected{
  width:7px;
  height:20px;
  border:1px solid #3d8fd0;
  border-left:0;
}

/* three panes */
.workspace{
  flex:1;
  min-height:0;
  display:grid;
  grid-template-columns:200px 1fr 170px;
  column-gap:4px;
}
.panelhead{
  flex:none;
  height:15px;
  display:flex;
  justify-content:space-between;
  align-items:center;
  padding-right:3px;
  border:1px solid #a5a5a5;
  border-left:0;
  border-radius:2px;
  background-color:#f0f0f0;
}
.panelhead svg{
  width:24px;
  height:10px;
}
.graybtn{
  border:1px solid #c6c6c6;
  background-color:#cbcbcb;
  color:#8b8b8b;
}

.screenlist{
  display:flex;
  flex-direction:column;
  min-width:0;
  padding-top:4px;
  background-color:#fafafa;
}
.searchrow{
  flex:none;
  height:27px;
  display:grid;
  grid-template-columns:72px 79px 42px;
  align-items:center;
  border-bottom:1px solid #e8e8e8;
}
.panelhead + .searchrow{
  height:33px;
  padding-top:6px;
}
.searchrow.last{
  height:31px;
  padding-top:2px;
}
.searchrow .graybtn{
  height:18px;
  margin-left:3px;
}
#search{
  height:19px;
  border:1px solid #888;
  background-color:#fff;
}
.dropdown{
  position:relative;
}
.searchrow .dropdown{
  grid-column:2 / 4;
  margin-right:-3px;
}
.dropdown select{
  display:block;
  width:100%;
  height:19px;
  padding-left:4px;
  border:1px solid #adadad;
  background-color:#e3e3e3;
  appearance:none;
}
.dropdown::after{
  content:"";
  position:absolute;
  right:5px;
  top:5px;
  width:5px;
  height:5px;
  border:solid #666;
  border-width:0 1px 1px 0;
  transform:rotate(45deg);
}
.zoom{
  width:110px;
  margin-right:3px;
}
.zoom select{
  height:20px;
  background-color:#f2f2f2;
  color:#777;
  font:10px "Open Sans", sans-serif;
}
.zoom::after{
  right:3px;
  top:9px;
  width:0;
  height:0;
  border:solid transparent;
  border-width:3px 2px 0;
  border-top-color:#555;
  transform:none;
}
.listtools{
  flex:none;
  height:27px;
  display:flex;
  align-items:center;
  margin:0 0 7px -4px;
}
.listtools .sep{
  margin:0 4px 0 3px;
}
.tree{
  position:relative;
  flex:1;
  display:flex;
  flex-direction:column;
  margin-right:1px;
  border:solid #7d7d7d;
  border-width:1px 1px 1px 0;
  background-color:#fefaf0;
  overflow:hidden;
}
.tree ul{
  flex:1;
  list-style:none;
}
.tree li{
  height:22px;
  line-height:22px;
  text-indent:-4px;
}
.tree li.current{
  background-color:#d3e0fb;
  color:#22308c;
}
.tree li.item{
  height:46px;
  display:grid;
  grid-template-columns:68px 120px 12px;
  align-items:center;
  text-indent:0;
}
.tree .name{
  padding-right:4px;
  text-align:center;
}
.thumb{
  height:44px;
  width:49px;
}
.thumb.black{
  height:36px;
  background-color:#000;
}
.thumb.logic{
  border:1px solid #888;
  border-left:0;
  box-shadow:inset -4px 0 #fff, inset -6px 0 #5048b8;
  background-color:#fff;
  color:#d3474d;
  line-height:14px;
}
.thumb.init{
  color:#5a50c8;
}
.thumb b{
  display:block;
  padding-left:2px;
  font-size:10px;
}
.thumb svg{
  width:48px;
  height:28px;
}
.swirl{
  position:absolute;
  left:0;
  top:0;
  width:16px;
  height:64px;
}
.hscroll{
  height:14px;
  display:flex;
  align-items:center;
  background-color:#f0f0f0;
}
.hscroll svg{
  width:8px;
  height:8px;
}
.hscroll .bar{
  height:14px;
  background-color:#cdcdcd;
}
.tree .hscroll{
  flex:none;
  justify-content:space-between;
  padding-right:4px;
}
.tree .bar{
  width:124px;
}
.docktabs{
  flex:none;
  height:25px;
  display:flex;
  padding:1px 0 5px;
  color:#999;
  font:10px/18px "Open Sans", sans-serif;
}
.docktabs button{
  display:flex;
  align-items:center;
  gap:3px;
  padding:0 2px;
  border-top:2px solid #999;
}
.docktabs button + button::before{
  content:"";
  width:1px;
  height:12px;
  margin-right:-1px;
  background-color:#777;
}
.docktabs svg{
  width:15px;
  height:15px;
}
.docktabs .active{
  padding:0 4px 0 2px;
  margin-left:4px;
  border:solid #888;
  border-width:0 1px 1px 0;
  color:#222;
}
.docktabs .active.active::before{
  display:none;
}

/* document pane */
.document{
  min-width:0;
  display:flex;
  flex-direction:column;
  margin-bottom:2px;
  border:1px solid #999;
  background-color:#f0f0f0;
}
.doctabs{
  flex:none;
  height:21px;
  display:flex;
  align-items:center;
  padding-left:2px;
  background-color:#f9f9f9;
  color:#aaa;
  font:10px/16px "Open Sans", sans-serif;
}
.doctabs button{
  height:17px;
  display:flex;
  align-items:center;
  gap:7px;
  padding:0 4px;
  border-right:1px solid #888;
}
.doctabs button svg{
  width:15px;
  height:15px;
}
.doctabs button:nth-child(2){
  padding-left:3px;
}
.doctabs button:nth-child(3){
  border-right:0;
  padding:0 4px 0 3px;
}
.doctabs .active{
  gap:5px;
  color:#111;
  font-size:11px;
  font-weight:bold;
}
.close{
  position:relative;
  width:11px;
  height:11px;
  margin-left:2px;
  border:1px solid #777;
}
.active .close{
  margin-left:0;
}
.close::before,
.close::after{
  content:"";
  position:absolute;
  left:1px;
  top:4px;
  width:7px;
  height:1px;
  background-color:#555;
  transform:rotate(45deg);
}
.close::after{
  transform:rotate(-45deg);
}
.arrows{
  width:18px;
  height:10px;
  margin-left:auto;
  margin-right:5px;
}
.pagetabs{
  flex:none;
  height:20px;
  display:flex;
  align-items:stretch;
  padding-left:4px;
}
.pagetabs button{
  padding:5px 5px 0 3px;
  border-right:1px solid #ddd;
}
.pagetabs button + button{
  padding:5px 6px 0 5px;
}
.pagetabs button.active{
  padding:1px 5px 0;
  background-color:#fff;
}
.pagetabs button:nth-child(4){
  padding:5px 11px 0 4px;
}
.pagetabs button.wide{
  padding:5px 3px 0 4px;
}
.scrollarea{
  flex:1;
  min-height:0;
  display:grid;
  grid-template:1fr 20px / 1fr 20px;
  margin-left:4px;
}
.page{
  min-width:0;
  display:flex;
  flex-direction:column;
  background-color:#fff;
  border-bottom:1px solid #999;
}
.settings{
  padding:1px 71px 4px 15px;
}
.upper{
  display:grid;
  grid-template-columns:380px 1fr;
  column-gap:15px;
  margin-bottom:9px;
}
.cutbox{
  height:88px;
  border:1px solid #e0e0e0;
  border-top:0;
}
.cutbox > .tick{
  margin:7px 0 0 33px;
}
.tick{
  display:flex;
  align-items:center;
  gap:3px;
  line-height:12px;
}
.tick input{
  flex:none;
  position:relative;
  width:12px;
  height:12px;
  border:1px solid #444;
  background-color:#fff;
  appearance:none;
}
.tick input:checked::after{
  content:"";
  position:absolute;
  left:3px;
  top:0;
  width:4px;
  height:7px;
  border:solid #333;
  border-width:0 1px 1px 0;
  transform:rotate(40deg);
}
fieldset{
  min-width:0;
  border:1px solid #e0e0e0;
}
.mail{
  width:238px;
  height:51px;
  margin:13px 0 0 23px;
}
.mail legend{
  margin-left:9px;
  padding-right:25px;
}
.disabled{
  color:#777;
}
.field{
  height:22px;
  display:grid;
  grid-template-columns:145px auto auto 1fr;
  align-items:center;
  padding-left:20px;
  line-height:11px;
}
.mail .field{
  height:32px;
  grid-template-columns:110px auto auto 1fr;
  padding:9px 0 0 18px;
}
.spin{
  width:42px;
  height:18px;
  display:flex;
  border:1px solid #b5b5b5;
  background-color:#fff;
}
.spin.wide{
  width:51px;
}
.spin input{
  flex:1;
  min-width:0;
  padding-left:2px;
}
.disabled .spin{
  background-color:#f4f4f4;
}
.updown{
  width:12px;
  display:flex;
  flex-direction:column;
  justify-content:space-evenly;
  align-items:center;
  background-color:#ececec;
}
.updown::before,
.updown::after{
  content:"";
  border:solid transparent;
  border-width:0 3px 3px;
  border-bottom-color:#222;
}
.updown::after{
  border-width:3px 3px 0;
  border-top-color:#222;
}
.pad{
  width:16px;
  height:17px;
  display:flex;
  justify-content:center;
  align-items:center;
  margin-left:2px;
  background-color:#cfcfcf;
  color:#444;
}
.pad:disabled{
  background-color:#bdbdbd;
  color:#888;
}
.pad svg{
  width:11px;
  height:12px;
}
.format{
  display:flex;
  padding:4px 0 3px;
}
.format legend{
  margin-left:4px;
  padding:0 2px;
}
.format h2{
  height:14px;
  margin-bottom:4px;
  font-size:10px;
  font-weight:normal;
  line-height:14px;
}
.rowside{
  width:275px;
}
.rowside h2{
  padding-left:5px;
}
.field.check{
  display:flex;
  padding-left:18px;
}
.field.long{
  grid-template-columns:178px auto auto 1fr;
}
.field.results{
  margin-top:22px;
}
.colside .field{
  grid-template-columns:114px 60px auto auto;
  justify-content:start;
  padding-left:13px;
}
.colside .tick{
  line-height:11px;
}
.field .span{
  grid-column:1 / 3;
  padding-left:1px;
}
.readonly{
  width:51px;
  height:19px;
  padding-left:3px;
  border:1px solid #999;
  background-color:#f2f2f2;
}

/* column / row layout table */
.layout{
  flex:1;
  min-height:0;
  display:grid;
  grid-template:22px 1fr / 92px 1fr;
  padding-right:3px;
  border-top:1px solid #888;
  border-left:1px solid #aaa;
  color:#666;
}
.coltools{
  grid-column:2;
  display:flex;
  align-items:center;
  gap:32px;
  padding-left:24px;
}
.rowtools{
  display:flex;
  flex-direction:column;
  align-items:flex-start;
  gap:13px;
  padding:15px 0 0 15px;
}
.rowtools .details{
  margin-bottom:7px;
}
.gridarea{
  border:1px solid #777;
  background-color:#aaa;
}
table{
  width:574px;
  table-layout:fixed;
  border-collapse:collapse;
  background-color:#fff;
  color:#222;
}
.c-no{ width:10px; }
.c-head{ width:112px; }
.c-item{ width:100px; }
.c-time{ width:50px; }
.c-data{ width:84px; }
th, td{
  height:17px;
  font-weight:normal;
  line-height:12px;
  white-space:nowrap;
}
th{
  border:1px solid #999;
  background-color:#f1f1f1;
  text-align:center;
}
tr:first-child th{
  border-top:0;
}
th:first-child{
  border-left:0;
}
td{
  padding:0 3px;
  border:1px solid #eee;
}
td:last-child{
  border-right-color:#888;
}
tr:last-child td{
  border-bottom-color:#888;
}
.picked{
  background:linear-gradient(to top right, #0b78d7 47%, #6fa9da 50%, #0b78d7 53%);
}
.stars{
  font-size:9px;
  font-weight:bold;
}
.right{
  text-align:right;
}
.vscroll{
  width:14px;
  display:flex;
  flex-direction:column;
  align-items:center;
  padding:5px 0 2px;
  background-color:#f0f0f0;
}
.vscroll svg{
  width:8px;
  height:8px;
}
.vscroll .bar{
  flex:1;
  width:14px;
  margin:136px 0 5px;
  background-color:#cdcdcd;
}
.scrollarea .hscroll{
  margin-top:1px;
  gap:4px;
  padding:0 4px 0 3px;
}
.scrollarea .hscroll .bar{
  flex:1;
  margin-right:6px;
}

/* package pane */
.package{
  min-width:0;
  display:flex;
  flex-direction:column;
  padding-top:4px;
  background-color:#fafafa;
  overflow:hidden;
}
.package .panelhead{
  padding-left:3px;
  border-left:1px solid #a5a5a5;
  border-right:0;
}
.favorite{
  flex:none;
  height:19px;
  margin:9px 0 14px 7px;
  padding-left:3px;
  border:1px solid #adadad;
  border-right:0;
  background-color:#e3e3e3;
  text-align:left;
}
.packlist{
  flex:1;
  margin-left:8px;
  border:1px solid #444;
  border-right:0;
  background-color:#fff;
}
.packbtns{
  flex:none;
  display:flex;
  gap:3px;
  padding:9px 0 5px 8px;
}
.packbtns .graybtn{
  width:61px;
  height:18px;
  color:#a3a3a3;
  text-shadow:1px 1px #eee;
}
.package .docktabs button{
  padding-left:4px;
}
.package .docktabs button:first-child{
  padding-left:6px;
}

/* function keys */
.keys{
  flex:none;
  height:22px;
  display:grid;
  grid-template-columns:87px repeat(11, 102px);
  align-items:center;
  background:linear-gradient(#fff, #f4f4f4);
  color:#222;
  font:11px/16px "Open Sans", sans-serif;
}
.keys span{
  display:flex;
  gap:3px;
  white-space:nowrap;
}
.keys kbd{
  min-width:21px;
  padding:0 2px;
  background-color:#e3e3e3;
  color:#aaa;
  font:10px/15px "Open Sans", sans-serif;
}
.keys .on kbd{
  min-width:5px;
  padding:0;
  background-color:#d3e4f5;
  color:#222;
  font-size:11px;
}
```
